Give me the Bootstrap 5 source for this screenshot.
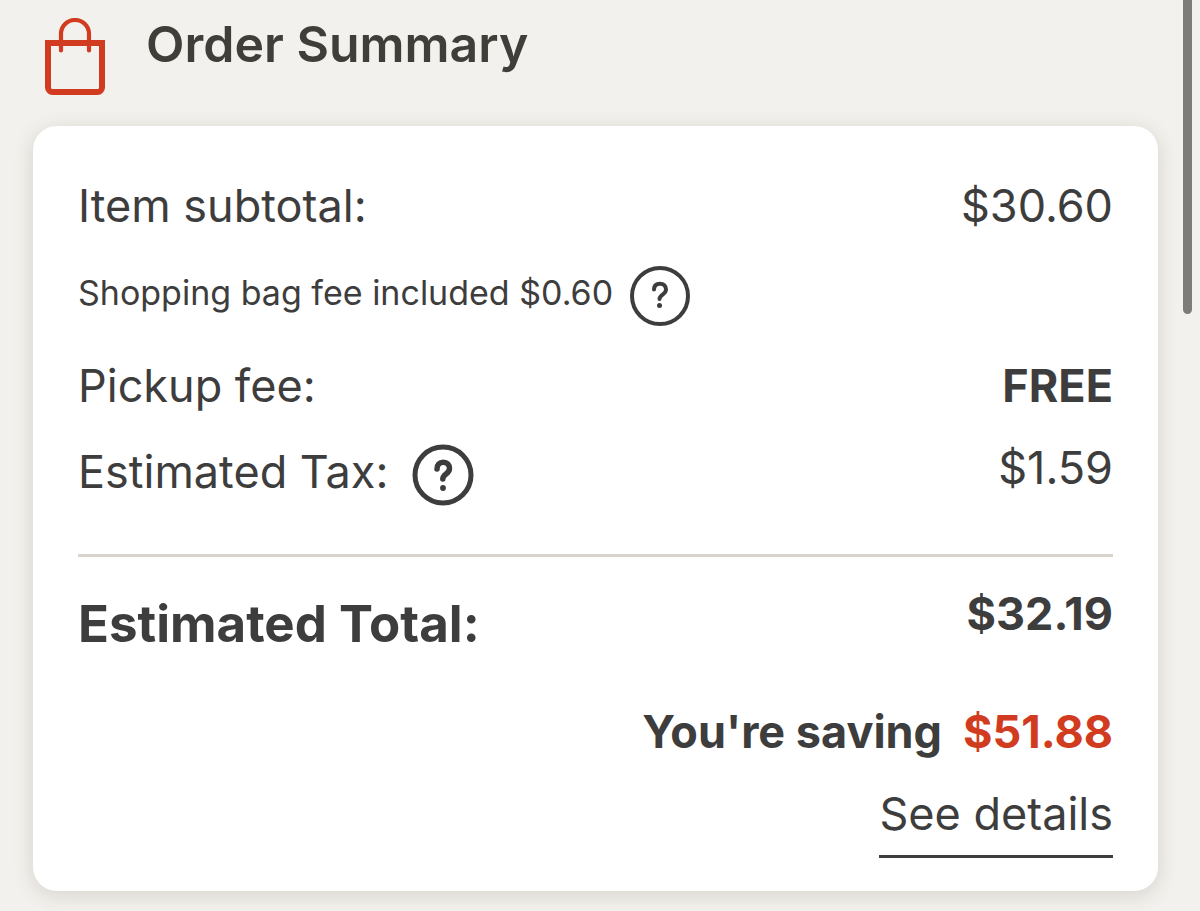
<!DOCTYPE html>
<html lang="en">
<head>
<meta charset="utf-8">
<meta name="viewport" content="width=device-width, initial-scale=1">
<title>Order Summary</title>
<link href="https://cdn.jsdelivr.net/npm/bootstrap@5.3.0/dist/css/bootstrap.min.css" rel="stylesheet">
<style>
body{background:#f3f1ed;color:#3e3d3d;font-family:Inter,sans-serif;font-size:45px;line-height:56px}
.summary-page{padding:14px 42px 20px 33px}
.summary-title{font-size:50px;line-height:60px;font-weight:600;margin-left:41px;color:#403e39}
.bag-icon{width:60px;height:78px;margin:4px 0 0 12px}
.summary-card{border-radius:24px;background:#fff;box-shadow:0 4px 20px rgba(60,55,40,.16);padding:52px 45px 33px;margin-top:30px}
.fee-row{margin-top:31px}
.fee-note{font-size:34px}
.tight-row{margin-top:26px}
.tax-label{padding-top:4px}
.help-btn{width:62px;height:62px;color:#3e3d3d}
.total-row{padding-bottom:50px}
.total-label{font-size:51px;line-height:60px;padding-top:8px}
.divider{border-top:3px solid #d8d4cd;margin:48px 0 29px;opacity:1}
.saving-row{gap:21px}
.saving-amount{color:#d13c20}
.details-link{color:#3e3d3d;border-bottom:3px solid #3e3d3d;padding-bottom:13px}
.scroll-thumb{top:0;right:8px;width:9px;height:314px;border-radius:0 0 5px 5px;background:#7d7c7a}
</style>
</head>
<body>
<main class="summary-page">
<header class="d-flex align-items-start">
<svg class="bag-icon" viewBox="0 0 60 78" fill="none" stroke="#d13c20" aria-hidden="true"><path stroke-width="6" d="M3 25H57V69.500a4.500 4.500 0 0 1-4.500 4.500H7.500A4.500 4.500 0 0 1 3 69.500Z"/><path d="M16 32.500V16a14 14 0 0 1 28 0v16.500" stroke-width="4.200" stroke-linecap="round"/></svg>
<h1 class="summary-title mb-0">Order Summary</h1>
</header>
<section class="summary-card">
<div class="d-flex justify-content-between"><span>Item subtotal:</span><span>$30.60</span></div>
<div class="d-flex align-items-start column-gap-3 fee-row"><span class="fee-note">Shopping bag fee included $0.60</span>
<button type="button" class="btn p-0 border-0 help-btn d-flex" aria-label="About the bag fee"><svg viewBox="0 0 62 62" fill="none" stroke="currentColor" stroke-width="4"><circle cx="31" cy="31" r="28"/><path d="M25 24.500c0-4 2.500-5.800 6-5.800s6 2.300 6 5.800c0 5-6.500 5-6.500 9.500" stroke-linecap="round"/><circle cx="30.500" cy="40.500" r="2.500" fill="currentColor" stroke="none"/></svg></button></div>
<div class="d-flex justify-content-between fee-row"><span>Pickup fee:</span><strong>FREE</strong></div>
<div class="d-flex align-items-start justify-content-between tight-row"><div class="d-flex align-items-start gap-4 tax-label"><span>Estimated Tax:</span>
<button type="button" class="btn p-0 border-0 help-btn d-flex" aria-label="About estimated tax"><svg viewBox="0 0 62 62" fill="none" stroke="currentColor" stroke-width="5"><circle cx="31" cy="31" r="28"/><path d="M25 25c0-4.500 2.500-6.800 6.300-6.800s6.200 2.600 6.200 6.300c0 5.500-6.700 5.500-6.700 10.500" stroke-linecap="round" stroke-width="5.500"/><circle cx="31" cy="44" r="2.900" fill="currentColor" stroke="none"/></svg></button></div><span>$1.59</span></div>
<hr class="divider">
<div class="d-flex align-items-start justify-content-between total-row"><strong class="total-label">Estimated Total:</strong><strong>$32.19</strong></div>
<div class="d-flex justify-content-end saving-row"><strong>You're saving</strong><strong class="saving-amount">$51.88</strong></div>
<div class="d-flex justify-content-end tight-row"><a href="#" class="details-link text-decoration-none">See details</a></div>
</section>
</main>
<div class="scroll-thumb position-fixed"></div>
<script src="https://cdn.jsdelivr.net/npm/bootstrap@5.3.0/dist/js/bootstrap.bundle.min.js"></script>
</body>
</html>
